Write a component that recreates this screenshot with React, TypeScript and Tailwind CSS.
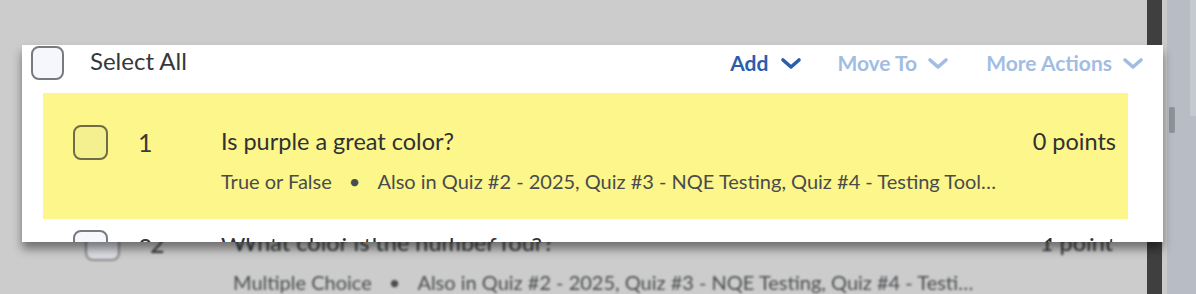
import React from 'react';

const font = { fontFamily: 'Lato, "Open Sans", sans-serif' };

const Chevron = ({ className }: { className?: string }) => (
  <svg viewBox="0 0 22 13" className={className} fill="none">
    <polyline points="3,3 11,10 19,3" stroke="currentColor" strokeWidth="3.6" strokeLinecap="round" strokeLinejoin="round" />
  </svg>
);

interface RowProps {
  num: string;
  title: string;
  points: string;
  kind: string;
  also: string;
  box: string;
  metaW: string;
}

// one question row, shared by the dragged copy and the list underneath
const QuestionRow: React.FC<RowProps> = ({ num, title, points, kind, also, box, metaW }) => (
  <div className="flex items-start">
    <div className={`ml-[30px] w-[35px] h-[35px] shrink-0 rounded-[8px] border-2 ${box}`} />
    <div className="ml-[30px] w-[52px] shrink-0 pt-[1px] text-[25px] leading-[32px] text-[#3a3a3a]">{num}</div>
    <div className="ml-[31px] flex-1 min-w-0">
      <div className="flex items-start justify-between pr-[12px]">
        <span className="text-[23.5px] leading-[32px] text-[#2f3133]">{title}</span>
        <span className="text-[23.5px] leading-[32px] text-[#2f3133]">{points}</span>
      </div>
      <div className={`mt-[11px] truncate text-[20px] leading-[26px] text-[#494c4e] ${metaW}`}>
        {kind}
        <span className="mx-[17px]">•</span>
        {also}
      </div>
    </div>
  </div>
);

const also = 'Also in Quiz #2 - 2025, Quiz #3 - NQE Testing, Quiz #4 - Testing Tools for all';

export default function App() {
  return (
    <div className="relative flex h-[294px] w-[1196px] overflow-hidden bg-[#cccccc]" style={font}>
      {/* list behind the drag ghost */}
      <div className="flex-1 pt-[226px] pl-[55px] pr-[22px] blur-[1.2px]">
        <QuestionRow
          num="2"
          title="What color is the number four?"
          points="1 point"
          kind="Multiple Choice"
          also={also}
          box="border-[#8a8a8a] bg-[#dcdde2]"
          metaW="w-[750px]"
        />
      </div>
      <div className="w-[15px] bg-[#3f3f3f]" />
      <div className="w-[5px] bg-[#cacaca]" />
      <div className="flex w-[29px] bg-[#b8bcc4]">
        <div className="ml-[2px] mt-[107px] h-[26px] w-[6px] rounded-[2px] bg-[#8f9298]" />
        <div className="ml-auto h-[116px] w-[6px] bg-[#c6c9cf]" />
      </div>

      {/* dragged selection */}
      <div className="absolute left-[22px] top-[45px] h-[197px] w-[1141px] overflow-hidden bg-white shadow-[0_7px_9px_rgba(0,0,0,0.45)]">
        <div className="flex h-[48px] items-start">
          <div className="ml-[9px] mt-[1px] h-[34px] w-[33px] rounded-[8px] border-2 border-[#777a7e] bg-[#f5f7fd]" />
          <span className="ml-[26px] mt-[1px] text-[24px] leading-[30px] text-[#35383b]">Select All</span>
          <div className="ml-auto mr-[18px] mt-[4px] flex items-center text-[21px] font-bold leading-[28px]">
            <span className="text-[#2a5eab]">Add</span>
            <Chevron className="ml-[11px] h-[13px] w-[24px] text-[#2a5eab]" />
            <span className="ml-[34px] text-[#a2bde2]">Move To</span>
            <Chevron className="ml-[9px] h-[13px] w-[24px] text-[#a2bde2]" />
            <span className="ml-[36px] text-[#a2bde2]">More Actions</span>
            <Chevron className="ml-[9px] h-[13px] w-[24px] text-[#a2bde2]" />
          </div>
        </div>
        <div className="ml-[21px] mr-[35px] h-[126px] bg-[#fcf68b] pt-[32px]">
          <QuestionRow
            num="1"
            title="Is purple a great color?"
            points="0 points"
            kind="True or False"
            also={also}
            box="border-[#6f6c48] bg-[#f4f08f]"
            metaW="w-[782px]"
          />
        </div>
        <div className="ml-[21px] mr-[35px] pt-[11px]">
          <QuestionRow
            num="2"
            title="What color is the number four?"
            points="1 point"
            kind="Multiple Choice"
            also={also}
            box="border-[#777a7e] bg-[#f5f7fd]"
            metaW="w-[782px]"
          />
        </div>
      </div>
    </div>
  );
}
